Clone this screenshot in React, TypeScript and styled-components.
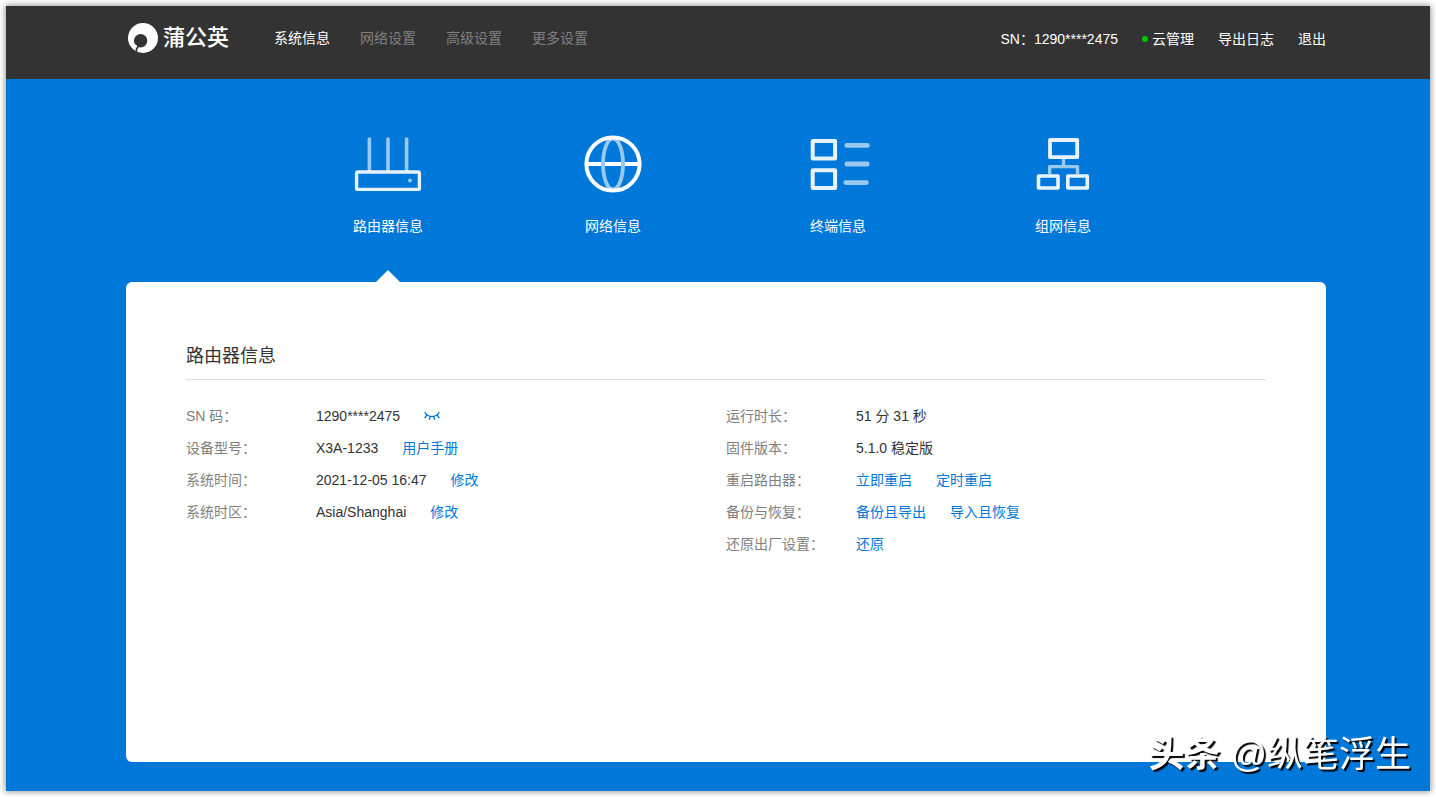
import React from 'react';
import styled, { createGlobalStyle } from 'styled-components';

const GlobalStyle = createGlobalStyle`
  *, *::before, *::after { box-sizing: border-box; }
  body {
    margin: 0;
    background: #fff;
    color: #333;
    font: 14px/20px "Liberation Sans", Arial, "Noto Sans CJK SC", sans-serif;
  }
  a { color: inherit; text-decoration: none; }
  h1, h2, dl, dt, dd { margin: 0; font-weight: 400; }
  button { font: inherit; color: inherit; background: none; border: 0; padding: 0; cursor: pointer; }
`;

const Screen = styled.div`
  min-height: 100vh;
  padding: 6px;
  display: flex;
`;

const Page = styled.div`
  flex: 1;
  display: flex;
  flex-direction: column;
  background: #0078d9;
  box-shadow: 0 0 6px 1px rgba(0, 0, 0, 0.4);
`;

const Header = styled.header`
  display: flex;
  align-items: center;
  height: 73px;
  padding: 0 104px 9px 120px;
  background: #333;
`;

const Brand = styled.a`
  display: flex;
  align-items: center;
  gap: 5px;
  padding-left: 2px;
  margin-right: 45px;
  color: #fff;
  font-size: 22px;
  font-weight: 500;
  line-height: 30px;
`;

const MainNav = styled.nav`
  display: flex;
  gap: 30px;
`;

const NavLink = styled.a<{ $active?: boolean }>`
  color: ${(p) => (p.$active ? '#fff' : '#808080')};
`;

const Account = styled.div`
  display: flex;
  gap: 24px;
  margin-left: auto;
  padding-top: 2px;
  color: #fff;
`;

const CloudLink = styled.a`
  display: flex;
  align-items: center;
  gap: 4px;
  &::before {
    content: '';
    width: 6px;
    height: 6px;
    border-radius: 50%;
    background: #00c800;
  }
`;

const Main = styled.main`
  flex: 1;
  display: flex;
  flex-direction: column;
  padding: 49px 104px 29px 120px;
`;

const Tabs = styled.nav`
  display: grid;
  grid-template-columns: repeat(4, 1fr);
  width: 75%;
  margin: 0 auto;
`;

const Tab = styled.button<{ $active?: boolean }>`
  position: relative;
  display: flex;
  flex-direction: column;
  align-items: center;
  gap: 16px;
  padding-right: 1px;
  padding-bottom: 46px;
  color: #fff;
  &::after {
    content: '';
    display: ${(p) => (p.$active ? 'block' : 'none')};
    position: absolute;
    bottom: 0;
    border: 12px solid transparent;
    border-top: 0;
    border-bottom-color: #fff;
  }
`;

const Card = styled.section`
  flex: 1;
  padding: 60px;
  border-radius: 6px;
  background: #fff;
`;

const CardTitle = styled.h1`
  padding-bottom: 9px;
  border-bottom: 1px solid #ddd;
  font-size: 18px;
  line-height: 28px;
`;

const Columns = styled.div`
  display: grid;
  grid-template-columns: 1fr 1fr;
  margin-top: 20px;
`;

const Details = styled.dl``;

const Row = styled.div`
  display: flex;
  align-items: center;
  height: 32px;
`;

const Label = styled.dt`
  width: 130px;
  color: #808080;
`;

const Value = styled.dd`
  display: flex;
  align-items: center;
  gap: 24px;
`;

const Action = styled.button`
  display: flex;
  color: #0078d9;
`;

const Watermark = styled.div`
  position: fixed;
  right: 25px;
  bottom: 18px;
  color: #fff;
  font-size: 36px;
  line-height: 48px;
  text-shadow: 2px 2px 1px #000;
  pointer-events: none;
`;

const LogoMark = () => (
  <svg width="30" height="30" viewBox="0 0 30 30" aria-hidden="true">
    <circle cx="15" cy="15" r="15" fill="#fff" />
    <circle cx="12.600" cy="17.700" r="6.700" fill="#333" />
    <path d="M4.500 20.500 L8.800 22.300 L8.500 26 L5 26Z" fill="#fff" />
    <path d="M10.400 23 L8.600 26 L8 30" fill="none" stroke="#333" strokeWidth="1.700" />
  </svg>
);

const ClosedEye = () => (
  <svg width="16" height="16" viewBox="0 0 16 16" fill="none" stroke="currentColor" strokeWidth="1.300" strokeLinecap="round" aria-hidden="true">
    <path d="M1 4.500c1.500 2.700 4 4 7 4S13.500 7.200 15 4.500M3 7L1 9.500M6.200 8.700L5.500 11.300M9.800 8.700l.7 2.600M13 7L15 9.500" />
  </svg>
);

const TabIcon = ({ children }: { children: React.ReactNode }) => (
  <svg width="72" height="72" viewBox="0 0 72 72" fill="none" stroke="#fff" strokeLinejoin="round" aria-hidden="true">
    {children}
  </svg>
);

const tabs = [
  {
    label: '路由器信息',
    icon: (
      <>
        <path d="M17.400 11v31M36 11v31M54.600 11v31" strokeWidth="3.600" strokeLinecap="round" opacity=".6" />
        <rect x="4.600" y="44" width="62.800" height="17.400" rx="1.500" strokeWidth="3.400" opacity=".9" />
        <circle cx="58" cy="52.600" r="2" fill="#fff" stroke="none" opacity=".6" />
      </>
    ),
  },
  {
    label: '网络信息',
    icon: (
      <>
        <path d="M10 36h52" strokeWidth="4" />
        <ellipse cx="36" cy="36" rx="10" ry="25.500" stroke="#99c9f0" strokeWidth="3.800" />
        <circle cx="36" cy="36" r="26.600" strokeWidth="4" />
      </>
    ),
  },
  {
    label: '终端信息',
    icon: (
      <>
        <rect x="10.700" y="13" width="22.400" height="17.600" strokeWidth="4" opacity=".9" />
        <rect x="10.700" y="42.300" width="22.400" height="17.600" strokeWidth="4" opacity=".9" />
        <path d="M44.800 17.400h20.500M44.800 36h20.500M43.800 54.600h20.500" strokeWidth="4.800" strokeLinecap="round" opacity=".6" />
      </>
    ),
  },
  {
    label: '组网信息',
    icon: (
      <>
        <path d="M36.500 31v7.500M22.700 46v-7.400h27.800V46" strokeWidth="3.400" stroke="#99c9f0" />
        <g stroke="#e8f3fc">
          <rect x="23" y="12" width="27.200" height="17.200" strokeWidth="3.800" />
          <rect x="11.500" y="48" width="19.500" height="12" strokeWidth="3.600" />
          <rect x="40.800" y="48" width="19.500" height="12" strokeWidth="3.600" />
        </g>
      </>
    ),
  },
];

type Item = { label: string; value?: string; actions?: string[]; masked?: boolean };

const deviceInfo: Item[] = [
  { label: 'SN 码：', value: '1290****2475', masked: true },
  { label: '设备型号：', value: 'X3A-1233', actions: ['用户手册'] },
  { label: '系统时间：', value: '2021-12-05 16:47', actions: ['修改'] },
  { label: '系统时区：', value: 'Asia/Shanghai', actions: ['修改'] },
];

const systemInfo: Item[] = [
  { label: '运行时长：', value: '51 分 31 秒' },
  { label: '固件版本：', value: '5.1.0 稳定版' },
  { label: '重启路由器：', actions: ['立即重启', '定时重启'] },
  { label: '备份与恢复：', actions: ['备份且导出', '导入且恢复'] },
  { label: '还原出厂设置：', actions: ['还原'] },
];

const DetailList = ({ items }: { items: Item[] }) => (
  <Details>
    {items.map((item) => (
      <Row key={item.label}>
        <Label>{item.label}</Label>
        <Value>
          {item.value && <span>{item.value}</span>}
          {item.masked && (
            <Action type="button" aria-label="显示 SN 码">
              <ClosedEye />
            </Action>
          )}
          {item.actions?.map((action) => (
            <Action type="button" key={action}>{action}</Action>
          ))}
        </Value>
      </Row>
    ))}
  </Details>
);

export default function App() {
  return (
    <Screen lang="zh-CN">
      <GlobalStyle />
      <Page>
        <Header>
          <Brand href="#">
            <LogoMark />
            蒲公英
          </Brand>
          <MainNav>
            <NavLink href="#system" $active>系统信息</NavLink>
            <NavLink href="#network">网络设置</NavLink>
            <NavLink href="#advanced">高级设置</NavLink>
            <NavLink href="#more">更多设置</NavLink>
          </MainNav>
          <Account>
            <span>SN：1290****2475</span>
            <CloudLink href="#cloud">云管理</CloudLink>
            <a href="#log">导出日志</a>
            <a href="#logout">退出</a>
          </Account>
        </Header>
        <Main>
          <Tabs>
            {tabs.map((tab, i) => (
              <Tab type="button" key={tab.label} $active={i === 0}>
                <TabIcon>{tab.icon}</TabIcon>
                {tab.label}
              </Tab>
            ))}
          </Tabs>
          <Card>
            <CardTitle>路由器信息</CardTitle>
            <Columns>
              <DetailList items={deviceInfo} />
              <DetailList items={systemInfo} />
            </Columns>
          </Card>
        </Main>
      </Page>
      <Watermark><b>头条</b> @纵笔浮生</Watermark>
    </Screen>
  );
}
